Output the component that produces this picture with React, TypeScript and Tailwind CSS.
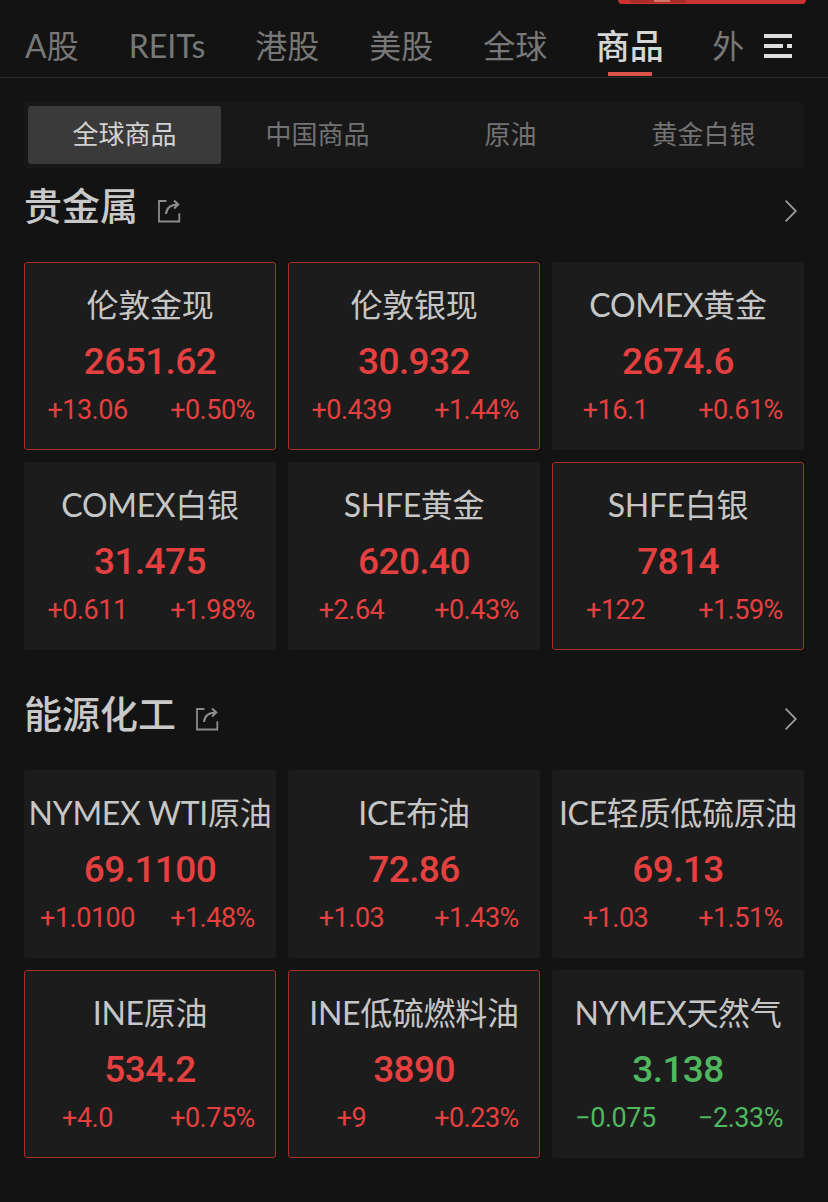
import clsx from 'clsx';

interface Quote {
  name: string;
  price: string;
  change: string;
  percent: string;
  flash?: boolean;
}

interface Section {
  title: string;
  quotes: Quote[];
}

const markets = ['A股', 'REITs', '港股', '美股', '全球', '商品', '外'];
const categories = ['全球商品', '中国商品', '原油', '黄金白银'];

const sections: Section[] = [
  {
    title: '贵金属',
    quotes: [
      { name: '伦敦金现', price: '2651.62', change: '+13.06', percent: '+0.50%', flash: true },
      { name: '伦敦银现', price: '30.932', change: '+0.439', percent: '+1.44%', flash: true },
      { name: 'COMEX黄金', price: '2674.6', change: '+16.1', percent: '+0.61%' },
      { name: 'COMEX白银', price: '31.475', change: '+0.611', percent: '+1.98%' },
      { name: 'SHFE黄金', price: '620.40', change: '+2.64', percent: '+0.43%' },
      { name: 'SHFE白银', price: '7814', change: '+122', percent: '+1.59%', flash: true },
    ],
  },
  {
    title: '能源化工',
    quotes: [
      { name: 'NYMEX WTI原油', price: '69.1100', change: '+1.0100', percent: '+1.48%' },
      { name: 'ICE布油', price: '72.86', change: '+1.03', percent: '+1.43%' },
      { name: 'ICE轻质低硫原油', price: '69.13', change: '+1.03', percent: '+1.51%' },
      { name: 'INE原油', price: '534.2', change: '+4.0', percent: '+0.75%', flash: true },
      { name: 'INE低硫燃料油', price: '3890', change: '+9', percent: '+0.23%', flash: true },
      { name: 'NYMEX天然气', price: '3.138', change: '-0.075', percent: '-2.33%' },
    ],
  },
];

function ShareIcon() {
  return (
    <svg width="24" height="24" viewBox="0 0 24 24" fill="none" stroke="#8c8c8c" strokeWidth="1.8">
      <path d="M9.5 2H2v20.5h20.3v-8.3" />
      <path d="M9 15C9.5 9.5 13 5.4 21 5.4M17 1.4l4.3 4-4.3 4.1" strokeWidth="2" />
    </svg>
  );
}

function ChevronIcon() {
  return (
    <svg width="14" height="24" viewBox="0 0 14 24" fill="none" stroke="#9a9a9a" strokeWidth="1.8">
      <path d="M1.6 1.6L11.8 12 1.6 22.4" />
    </svg>
  );
}

function MenuIcon() {
  return (
    <svg width="28" height="24" viewBox="0 0 28 24" fill="#dedede">
      <path d="M0 0h28v4H0zM0 10h19v4H0zM23 10h5v4h-5zM0 20h28v4H0z" />
    </svg>
  );
}

function QuoteCard({ quote }: { quote: Quote }) {
  const falling = quote.change.startsWith('-');

  return (
    <div
      className={clsx(
        'h-[188px] rounded-[3px] border bg-[#1c1c1c] text-center whitespace-nowrap',
        quote.flash ? 'border-[#a92f28]' : 'border-[#1c1c1c]',
      )}
    >
      <h3 className="mt-[18px] h-12 font-[Lato,'Noto_Sans_CJK_SC',sans-serif] text-[32px] leading-[48px] tracking-[-0.3px] text-[#c6c6c6]">
        {quote.name}
      </h3>
      <div
        className={clsx(
          "font-[Roboto,'Noto_Sans_CJK_SC',sans-serif]",
          falling ? 'text-[#4fb75d]' : 'text-[#e4403f]',
        )}
      >
        <p className="mt-[9px] h-12 text-[37px] leading-[48px] font-medium tracking-[-0.6px]">{quote.price}</p>
        <div className="grid h-12 grid-cols-2 text-[27px] leading-[48px] tracking-[-0.5px]">
          <span>{quote.change.replace('-', '−')}</span>
          <span>{quote.percent.replace('-', '−')}</span>
        </div>
      </div>
    </div>
  );
}

export default function App() {
  return (
    <div className="h-[1202px] w-[828px] overflow-hidden bg-[#131313] font-[Lato,'Noto_Sans_CJK_SC',sans-serif]">
      {/* Bottom edge of the promo banner */}
      <div className="ml-[618px] flex h-1 w-[188px] rounded-b-md bg-[#c93331]">
        <div className="ml-3 h-[3px] w-14 rounded-b-full bg-[#a92c29]">
          <div className="ml-6 h-0.5 w-4 bg-[#d07465]" />
        </div>
      </div>

      {/* Markets */}
      <nav className="flex h-[74px] items-stretch justify-between border-b border-[#292929] pr-9 pl-[25px]">
        <div className="flex gap-[50px] text-[32px] leading-[84px] whitespace-nowrap text-[#777]">
          {markets.map((market) =>
            market === '商品' ? (
              <div key={market} className="-mx-[1.5px] flex flex-col items-center text-[34px] font-medium text-[#d6d6d6]">
                <span className="h-[68px]">{market}</span>
                <span className="h-1 w-11 bg-[#dc554d]" />
              </div>
            ) : (
              <span key={market}>{market}</span>
            ),
          )}
        </div>
        <div className="mt-[30px]">
          <MenuIcon />
        </div>
      </nav>

      {/* Categories */}
      <div className="mx-6 mt-6 grid h-[66px] grid-cols-4 rounded-[3px] bg-[#181818] p-1 text-center text-[26px] leading-[57px] text-[#727272]">
        {categories.map((category, index) => (
          <span
            key={category}
            className={clsx(index === 0 && 'rounded-[3px] bg-[#3a3a3a] text-[#d2d2d2]')}
          >
            {category}
          </span>
        ))}
      </div>

      {sections.map((section, index) => (
        <section key={section.title} className={clsx('px-6', index > 0 && 'mt-[26px]')}>
          <header className="flex h-[94px] items-start justify-between">
            <div className="flex">
              <h2 className="mt-[9px] text-[38px] leading-[56px] font-medium text-[#c9c9c9]">
                {section.title}
              </h2>
              <div className="mt-[31px] ml-[19px]">
                <ShareIcon />
              </div>
            </div>
            <div className="mt-[31px] mr-[6px]">
              <ChevronIcon />
            </div>
          </header>
          <div className="grid grid-cols-3 gap-3">
            {section.quotes.map((quote) => (
              <QuoteCard key={quote.name} quote={quote} />
            ))}
          </div>
        </section>
      ))}
    </div>
  );
}
